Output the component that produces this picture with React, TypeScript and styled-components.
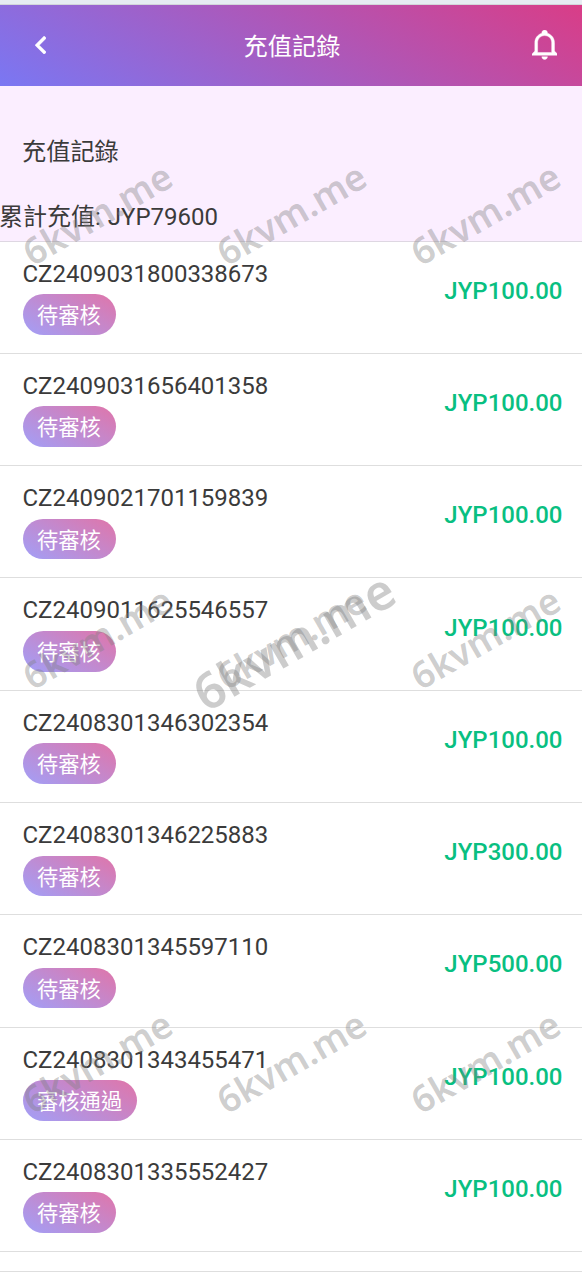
import React from 'react';
import styled, { createGlobalStyle } from 'styled-components';

const GlobalStyle = createGlobalStyle`
  * { box-sizing: border-box; }
  body {
    margin: 0;
    background: #fff;
    color: #3b3b3b;
    font-family: Roboto, "Noto Sans CJK TC", sans-serif;
    font-size: 24px;
    line-height: 28px;
  }
`;

const Page = styled.div`
  position: relative;
  width: 582px;
  height: 1272px;
  overflow: hidden;
`;

const StatusStrip = styled.div`
  height: 5px;
  background: #e6ecf2;
  border-bottom: 1px solid #d2d6da;
`;

const Header = styled.header`
  display: grid;
  grid-template-columns: 80px 1fr 80px;
  align-items: center;
  height: 81px;
  color: #fff;
  background: linear-gradient(30deg, #7a77f3, #d93d87);
`;

const Title = styled.h1`
  margin: 0;
  padding: 2px 0 0 2px;
  font-size: 24.2px;
  font-weight: 400;
  text-align: center;
`;

const IconButton = styled.button<{ $side: 'left' | 'right' }>`
  display: flex;
  justify-content: ${p => (p.$side === 'left' ? 'flex-start' : 'flex-end')};
  padding: ${p => (p.$side === 'left' ? '0 0 1px 34.5px' : '0 25px 1px 0')};
  border: 0;
  color: inherit;
  background: none;
`;

const Summary = styled.section`
  height: 155.52px;
  padding-top: 52px;
  border-bottom: 1px solid #ded7e2;
  background: #fbeeff;
`;

const SummaryTitle = styled.h2`
  margin: 0 0 37px 22px;
  font-size: 24.2px;
  font-weight: 400;
`;

const Total = styled.p`
  margin: 0;
  text-indent: -1px;
  word-spacing: 1px;
`;

const List = styled.ul`
  margin: 0;
  padding: 0;
  list-style: none;
`;

const Row = styled.li`
  display: flex;
  justify-content: space-between;
  height: 112.3px;
  padding: 18px 19.5px 0 22.5px;
  border-bottom: 1px solid #dedede;
`;

const Footer = styled.div`
  height: 19.8px;
  border-bottom: 1px solid #dedede;
`;

const Badge = styled.div`
  width: fit-content;
  height: 40.5px;
  margin-top: 6.6px;
  padding: 0 15px 0 14.5px;
  border-radius: 21px;
  color: #fff;
  font-size: 21.3px;
  line-height: 43px;
  background: linear-gradient(30deg, #a29ff7, #e075a9);
`;

const Amount = styled.strong`
  margin-top: 17.2px;
  color: #09bf81;
  font-weight: 500;
`;

const WatermarkLayer = styled.div`
  position: absolute;
  inset: 0;
  display: grid;
  grid-template-columns: repeat(3, 1fr);
  grid-template-rows: repeat(3, 1fr);
  pointer-events: none;
`;

const Mark = styled.span<{ $large?: boolean }>`
  display: block;
  place-self: center;
  grid-area: ${p => (p.$large ? '1 / 1 / 4 / 4' : 'auto')};
  color: rgba(128, 128, 128, 0.4);
  font: 600 ${p => (p.$large ? 49.8 : 36.8)}px/1.3 "Noto Sans", sans-serif;
  white-space: nowrap;
  transform: ${p => (p.$large ? 'translate(3px, 4.5px)' : 'translate(1px, 2.5px)')} rotate(-30deg);
`;

const records = [
  ['CZ2409031800338673', '待審核', '100.00'],
  ['CZ2409031656401358', '待審核', '100.00'],
  ['CZ2409021701159839', '待審核', '100.00'],
  ['CZ2409011625546557', '待審核', '100.00'],
  ['CZ2408301346302354', '待審核', '100.00'],
  ['CZ2408301346225883', '待審核', '300.00'],
  ['CZ2408301345597110', '待審核', '500.00'],
  ['CZ2408301343455471', '審核通過', '100.00'],
  ['CZ2408301335552427', '待審核', '100.00'],
];

export default function App() {
  return (
    <Page>
      <GlobalStyle />
      <StatusStrip />
      <Header>
        <IconButton $side="left" aria-label="返回">
          <svg width="11.3" height="18.3" viewBox="8 6 7.41 12" fill="currentColor" stroke="currentColor" strokeWidth="0.3">
            <path d="M15.41 16.59 10.83 12l4.58-4.59L14 6l-6 6 6 6z" />
          </svg>
        </IconButton>
        <Title>充值記錄</Title>
        <IconButton $side="right" aria-label="通知">
          <svg width="25.3" height="29.5" viewBox="3 2 18 21" fill="currentColor" stroke="currentColor" strokeWidth="0.3">
            <path d="M10 21h4c0 1.100-.9 2-2 2s-2-.9-2-2M21 19v1H3v-1l2-2v-6c0-3.100 2-5.800 5-6.700V4c0-1.100.9-2 2-2s2 .9 2 2v.3c3 .9 5 3.600 5 6.700v6l2 2m-4-8c0-2.800-2.200-5-5-5s-5 2.200-5 5v7h10v-7z" />
          </svg>
        </IconButton>
      </Header>
      <Summary>
        <SummaryTitle>充值記錄</SummaryTitle>
        <Total>累計充值: JYP79600</Total>
      </Summary>
      <List>
        {records.map(([id, status, amount]) => (
          <Row key={id}>
            <div>
              <div>{id}</div>
              <Badge>{status}</Badge>
            </div>
            <Amount>JYP{amount}</Amount>
          </Row>
        ))}
      </List>
      <Footer />
      <WatermarkLayer aria-hidden="true">
        {Array.from({ length: 9 }, (_, i) => (
          <Mark key={i} style={{ gridArea: `${Math.floor(i / 3) + 1} / ${(i % 3) + 1}` }}>6kvm.me</Mark>
        ))}
        <Mark $large>6kvm.me</Mark>
      </WatermarkLayer>
    </Page>
  );
}
